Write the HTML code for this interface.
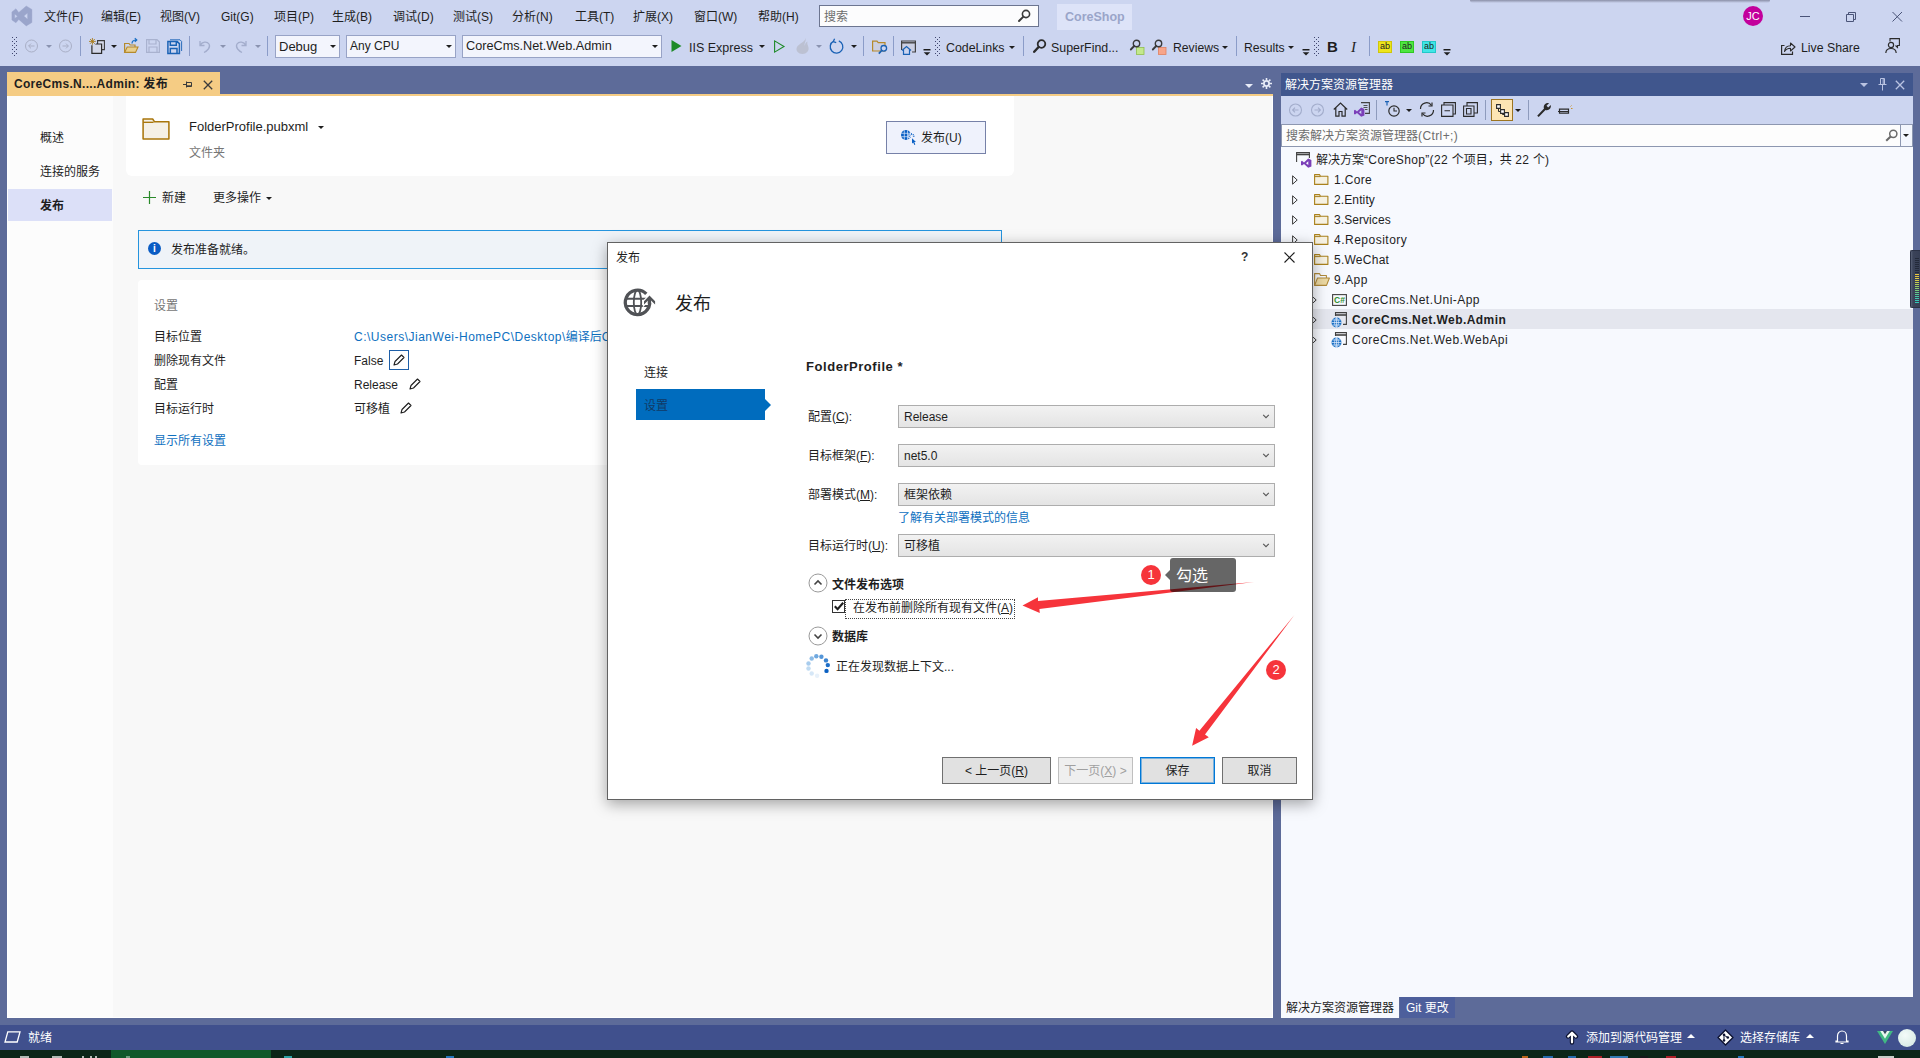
<!DOCTYPE html>
<html lang="zh-CN">
<head>
<meta charset="utf-8">
<title>CoreShop - Microsoft Visual Studio</title>
<style>
*{box-sizing:border-box;margin:0;padding:0}
html,body{width:1920px;height:1058px;overflow:hidden}
body{background:#5d6b99;font-family:"Liberation Sans","Noto Sans CJK SC",sans-serif;font-size:12px;color:#1e1e1e;position:relative;line-height:1}
.abs{position:absolute}
.t{position:absolute;white-space:nowrap;line-height:16px;height:16px}
#top{position:absolute;left:0;top:0;width:1920px;height:66px;background:#ccd5f0}
#status{position:absolute;left:0;top:1025px;width:1920px;height:25px;background:#40508d;color:#fff}
#taskbar{position:absolute;left:0;top:1050px;width:1920px;height:8px;background:#0b2618}
#doc{position:absolute;left:7px;top:96px;width:1266px;height:922px;background:#f8f8f8;overflow:hidden}
#doctab{position:absolute;left:7px;top:72px;width:213px;height:23px;background:#f5cc84}
#docline{position:absolute;left:7px;top:94px;width:1266px;height:2px;background:#f5cc84}
#se{position:absolute;left:1281px;top:73px;width:632px;height:945px}

.m{position:absolute;top:9px;line-height:16px;white-space:nowrap;color:#1e1e1e}
.tb{position:absolute;top:40px;line-height:16px;white-space:nowrap;color:#1e1e1e}
.sep{position:absolute;top:36px;width:1px;height:20px;background:#8b9cc8}
.dd{position:absolute;width:0;height:0;border-left:3px solid transparent;border-right:3px solid transparent;border-top:3px solid #1e1e1e}
.dd.g{border-top-color:#8a93b0}
.combo{position:absolute;top:35px;height:23px;background:#f3f5fd;border:1px solid #98a3c6;line-height:21px;padding-left:3px;white-space:nowrap;font-size:13px}
.grip{position:absolute;width:5px;height:19px;top:37px;background-image:radial-gradient(circle,#6d789c 0.6px,transparent 0.9px);background-size:2.5px 2.5px}
svg{position:absolute;overflow:visible}

#doc .nav{position:absolute;left:0;top:0;width:106px;height:922px;background:#fcfcfc}
#doc .card{position:absolute;background:#fff}
.lk{color:#0e70c0}

#se .title{position:absolute;left:0;top:0;width:632px;height:23px;background:#40568d;color:#fff}
#se .tbar{position:absolute;left:0;top:23px;width:632px;height:28px;background:#ccd5f0}
#se .search{position:absolute;left:0;top:51px;width:632px;height:23px;background:#fdfdfd;border:1px solid #8d97b0}
#se .tree{position:absolute;left:0;top:74px;width:632px;height:850px;background:#f7f9fe}
#se .row{position:absolute;left:0;width:632px;height:20px}
#se .row span{position:absolute;top:3px;line-height:16px;white-space:nowrap}
.exp{position:absolute;width:0;height:0}

#dlg{position:absolute;left:607px;top:242px;width:706px;height:558px;background:#fff;border:1px solid #626262;box-shadow:0 4px 14px rgba(0,0,0,.35)}
#dlg .cb{position:absolute;left:290px;width:377px;height:23px;border:1px solid #adadad;background:linear-gradient(#f2f2f2,#e4e4e4);line-height:23px;padding-left:5px;white-space:nowrap}
#dlg .btn{position:absolute;top:514px;height:27px;border:1px solid #707070;background:#e1e1e1;text-align:center;line-height:27px;white-space:nowrap}
#dlg u{text-decoration:underline}
.chev{position:absolute;left:363px}
#doc::after{content:"";position:absolute;left:0;top:0;right:0;bottom:0;border:1px solid #fff;border-top:none;pointer-events:none}
</style>
</head>
<body>
<div id="top">
<svg style="left:12px;top:6px" width="20" height="20" viewBox="0 0 20 20"><path d="M14.250 0 L19.900 3.400 V16.500 L14.250 19.900 L6.750 13.400 L3.900 16.800 L-0.1 14 V5.900 L3.900 2.750 L6.750 6.500 Z M2.700 8 L5.500 10.250 L2.700 12.500 Z M15.600 7 L11.800 10.100 L15.600 13.200 Z" fill="#9aa5cb" fill-rule="evenodd" stroke="#9aa5cb" stroke-width="0.4" stroke-linejoin="round"/></svg>
<span class="m" style="left:44px">文件(F)</span>
<span class="m" style="left:101px">编辑(E)</span>
<span class="m" style="left:160px">视图(V)</span>
<span class="m" style="left:221px">Git(G)</span>
<span class="m" style="left:274px">项目(P)</span>
<span class="m" style="left:332px">生成(B)</span>
<span class="m" style="left:393px">调试(D)</span>
<span class="m" style="left:453px">测试(S)</span>
<span class="m" style="left:512px">分析(N)</span>
<span class="m" style="left:575px">工具(T)</span>
<span class="m" style="left:633px">扩展(X)</span>
<span class="m" style="left:694px">窗口(W)</span>
<span class="m" style="left:758px">帮助(H)</span>
<div class="abs" style="left:819px;top:5px;width:220px;height:22px;background:#fcfcfd;border:1px solid #6c7590"></div>
<span class="m" style="left:824px;color:#6d6d6d">搜索</span>
<svg style="left:1018px;top:9px" width="13" height="13" viewBox="0 0 13 13"><circle cx="8" cy="5" r="3.6" fill="none" stroke="#3b3b3b" stroke-width="1.6"/><path d="M5.4 7.6 L1 12" stroke="#3b3b3b" stroke-width="2" stroke-linecap="round"/></svg>
<div class="abs" style="left:1057px;top:4px;width:75px;height:26px;background:#dde3f8"></div>
<span class="m" style="left:1065px;color:#9aa5c9;font-weight:bold;font-size:12.5px">CoreShop</span>
<div class="abs" style="left:1743px;top:6px;width:20px;height:20px;border-radius:10px;background:#c3009c;color:#fff;font-size:11px;line-height:20px;text-align:center">JC</div>
<svg style="left:1800px;top:11px" width="110" height="12" viewBox="0 0 110 12"><path d="M0 5.5 H10" stroke="#4a5478" stroke-width="1"/><path d="M46.5 3.5 H53.5 V10.5 H46.5 Z M48.5 3.5 V1.5 H55.5 V8.5 H53.5" fill="none" stroke="#4a5478" stroke-width="1"/><path d="M92.5 1 L102 10.5 M102 1 L92.5 10.5" stroke="#4a5478" stroke-width="1"/></svg>

<!-- toolbar -->
<svg style="left:12px;top:37px" width="5" height="19" viewBox="0 0 5 19" fill="#40466f" shape-rendering="crispEdges"><rect x="0" y="0" width="1" height="1"/><rect x="4" y="0" width="1" height="1"/><rect x="2" y="2" width="1" height="1"/><rect x="0" y="4" width="1" height="1"/><rect x="4" y="4" width="1" height="1"/><rect x="2" y="6" width="1" height="1"/><rect x="0" y="8" width="1" height="1"/><rect x="4" y="8" width="1" height="1"/><rect x="2" y="10" width="1" height="1"/><rect x="0" y="12" width="1" height="1"/><rect x="4" y="12" width="1" height="1"/><rect x="2" y="14" width="1" height="1"/><rect x="0" y="16" width="1" height="1"/><rect x="4" y="16" width="1" height="1"/><rect x="2" y="18" width="1" height="1"/></svg>
<svg style="left:25px;top:39px" width="50" height="14" viewBox="0 0 50 14"><g fill="none" stroke="#a9afc6" stroke-width="1"><circle cx="6.5" cy="7" r="6"/><path d="M9.5 7 H3.8 M6 4.6 L3.6 7 L6 9.4"/><circle cx="40.5" cy="7" r="6"/><path d="M37.5 7 H43.2 M41 4.6 L43.4 7 L41 9.4"/></g></svg>
<div class="dd g" style="left:46px;top:45px"></div>
<div class="sep" style="left:80px"></div>
<svg style="left:89px;top:38px" width="16" height="16" viewBox="0 0 16 16"><path d="M8.600 2.600 H15.400 V11.600 H8.600 Z" fill="#d9dcec" stroke="#3a3a3a" stroke-width="1.1"/><path d="M2.900 6 H12.600 V15.400 H2.900 Z" fill="#d3d7e8" stroke="#2b2b2b" stroke-width="1.2"/><circle cx="3.400" cy="3.400" r="3.900" fill="#ccd5f0"/><path d="M3.400 0 V6.800 M0 3.400 H6.800 M1 1 L5.800 5.800 M5.800 1 L1 5.800" stroke="#a87b1a" stroke-width="0.9"/></svg>
<div class="dd" style="left:111px;top:45px"></div>
<svg style="left:124px;top:38px" width="15" height="16" viewBox="0 0 15 16"><path d="M0.6 14.400 V5.5 H5 L6.2 7 H11 V9" fill="none" stroke="#b58a2c" stroke-width="1.2"/><path d="M0.6 14.400 L3.2 9 H14 L11.5 14.400 Z" fill="#e8cf8f" stroke="#b58a2c" stroke-width="1.1"/><path d="M8 5.5 C8 3 10 2 12.5 2 M10.8 0.3 L12.8 2 L10.8 3.900" fill="none" stroke="#1a6fc4" stroke-width="1.2"/></svg>
<svg style="left:146px;top:39px" width="14" height="14" viewBox="0 0 14 14"><path d="M0.6 0.6 H11 L13.4 3 V13.4 H0.6 Z M3 0.6 V5 H10 V0.6 M3 13.4 V8 H11 V13.4" fill="none" stroke="#a9b2cf" stroke-width="1.2"/></svg>
<svg style="left:167px;top:38px" width="16" height="16" viewBox="0 0 16 16"><path d="M0.900 3.600 H10.200 L12.400 5.600 V15.400 H0.900 Z M3.300 3.600 V7.200 H9.300 V3.600 M3.300 15.400 V10.600 H10 V15.400" fill="none" stroke="#1a62b5" stroke-width="1.5"/><path d="M3 1.800 H13 L14.600 3.400 V13" fill="none" stroke="#1a62b5" stroke-width="0.9"/></svg>
<div class="sep" style="left:189px"></div>
<svg style="left:199px;top:40px" width="50" height="13" viewBox="0 0 50 13"><g fill="none" stroke="#a3adcc" stroke-width="1.3"><path d="M1 1 V5.5 H5.5 M1.200 5.300 C3 1.500 8 1 10 4 C12 7.500 8 11 5 12.5"/><path d="M47 1 V5.5 H42.5 M46.800 5.300 C45 1.500 40 1 38 4 C36 7.500 40 11 43 12.5"/></g></svg>
<div class="dd g" style="left:220px;top:45px"></div>
<div class="dd g" style="left:255px;top:45px"></div>
<div class="sep" style="left:267px"></div>
<div class="combo" style="left:275px;width:65px">Debug</div><div class="dd" style="left:330px;top:45px"></div>
<div class="combo" style="left:346px;width:110px;font-size:12px">Any CPU</div><div class="dd" style="left:446px;top:45px"></div>
<div class="combo" style="left:462px;width:200px;font-size:12.700px">CoreCms.Net.Web.Admin</div><div class="dd" style="left:652px;top:45px"></div>
<svg style="left:671px;top:40px" width="11" height="12" viewBox="0 0 11 12"><path d="M0.5 0 L10.5 6 L0.5 12 Z" fill="#1d8a27"/></svg>
<span class="tb" style="left:689px;font-size:12.500px">IIS Express</span>
<div class="dd" style="left:759px;top:45px"></div>
<svg style="left:774px;top:40px" width="11" height="13" viewBox="0 0 11 13"><path d="M0.6 0.900 L10 6.500 L0.6 12.100 Z" fill="none" stroke="#1d8a27" stroke-width="1.1"/></svg>
<svg style="left:795px;top:38px" width="15" height="16" viewBox="0 0 15 16"><path d="M10.500 0 C10.500 4 3.500 5.500 1.800 9.500 C0.5 13 3.500 16 7.500 16 C11.500 16 14.200 13 13.500 9.500 C13 7 11.800 6 12.400 3.500 C10.200 4.500 10 6.500 10 7.800 C8.500 6 11.500 3 10.500 0 Z" fill="#bcc1d2"/></svg>
<div class="dd g" style="left:816px;top:45px"></div>
<svg style="left:829px;top:39px" width="15" height="15" viewBox="0 0 15 15"><path d="M4.600 2.200 A6.300 6.300 0 1 0 9.800 1.900 M5.600 -0.300 L4.200 2.600 L7.200 3.600" fill="none" stroke="#1a62b5" stroke-width="1.3"/></svg>
<div class="dd" style="left:851px;top:45px"></div>
<div class="sep" style="left:863px"></div>
<svg style="left:872px;top:40px" width="16" height="15" viewBox="0 0 16 15"><path d="M0.6 11 V1.200 H5 L6.200 2.700 H13 V11 Z" fill="#cbcfe2" stroke="#b58a2c" stroke-width="1.2"/><circle cx="11.800" cy="8.300" r="2.800" fill="#ccd5f0" stroke="#1a62b5" stroke-width="1.3"/><path d="M9.800 10.400 L6.800 13.600" stroke="#1a62b5" stroke-width="1.600"/></svg>
<div class="sep" style="left:893px"></div>
<svg style="left:901px;top:40px" width="16" height="15" viewBox="0 0 16 15"><path d="M0.6 10 V1 H14.400 V12 H11" fill="#cbcfe2" stroke="#424242" stroke-width="1.2"/><path d="M0.6 2.800 H14.400" stroke="#424242" stroke-width="1.4"/><path d="M2.500 9.500 V14.400 H8.500 V9.500" fill="#ccd5f0" stroke="#1a62b5" stroke-width="1.2"/><path d="M1 10.500 L5.500 6.500 L10 10.500" fill="none" stroke="#1a62b5" stroke-width="1.2"/></svg>
<svg style="left:923px;top:49px" width="8" height="7" viewBox="0 0 8 7"><path d="M0.5 0.75 H7.500" stroke="#1e1e1e" stroke-width="1.5"/><path d="M0.7 3.200 H7.300 L4 6.500 Z" fill="#1e1e1e"/></svg>
<svg style="left:935px;top:37px" width="5" height="19" viewBox="0 0 5 19" fill="#40466f" shape-rendering="crispEdges"><rect x="0" y="0" width="1" height="1"/><rect x="4" y="0" width="1" height="1"/><rect x="2" y="2" width="1" height="1"/><rect x="0" y="4" width="1" height="1"/><rect x="4" y="4" width="1" height="1"/><rect x="2" y="6" width="1" height="1"/><rect x="0" y="8" width="1" height="1"/><rect x="4" y="8" width="1" height="1"/><rect x="2" y="10" width="1" height="1"/><rect x="0" y="12" width="1" height="1"/><rect x="4" y="12" width="1" height="1"/><rect x="2" y="14" width="1" height="1"/><rect x="0" y="16" width="1" height="1"/><rect x="4" y="16" width="1" height="1"/><rect x="2" y="18" width="1" height="1"/></svg>
<span class="tb" style="left:946px;font-size:12.400px">CodeLinks</span><div class="dd" style="left:1009px;top:46px"></div>
<div class="sep" style="left:1023px"></div>
<svg style="left:1033px;top:39px" width="14" height="14" viewBox="0 0 14 14"><circle cx="8.500" cy="5" r="3.800" fill="none" stroke="#2b2b2b" stroke-width="1.8"/><path d="M5.600 8 L1.200 12.800" stroke="#2b2b2b" stroke-width="2.400" stroke-linecap="round"/></svg>
<span class="tb" style="left:1051px;font-size:12.400px">SuperFind...</span>
<svg style="left:1130px;top:39px" width="15" height="16" viewBox="0 0 15 16"><rect x="6.500" y="8.500" width="7.500" height="7" fill="#c3e88d" stroke="#8fbf4d" stroke-width="0.8"/><circle cx="6.500" cy="4.500" r="3.200" fill="none" stroke="#3a3a3a" stroke-width="1.4"/><path d="M4.200 7 L0.8 10.500" stroke="#3a3a3a" stroke-width="1.800" stroke-linecap="round"/></svg>
<svg style="left:1152px;top:39px" width="15" height="16" viewBox="0 0 15 16"><rect x="6.500" y="8.500" width="7.500" height="7" fill="#f7a58a" stroke="#e0805f" stroke-width="0.8"/><circle cx="6.500" cy="4.500" r="3.200" fill="none" stroke="#3a3a3a" stroke-width="1.4"/><path d="M4.200 7 L0.8 10.500" stroke="#3a3a3a" stroke-width="1.800" stroke-linecap="round"/></svg>
<span class="tb" style="left:1173px;font-size:12.200px">Reviews</span><div class="dd" style="left:1222px;top:46px"></div>
<div class="sep" style="left:1236px"></div>
<span class="tb" style="left:1244px;font-size:12.200px">Results</span><div class="dd" style="left:1288px;top:46px"></div>
<svg style="left:1302px;top:49px" width="8" height="7" viewBox="0 0 8 7"><path d="M0.5 0.75 H7.500" stroke="#1e1e1e" stroke-width="1.5"/><path d="M0.7 3.200 H7.300 L4 6.500 Z" fill="#1e1e1e"/></svg>
<svg style="left:1314px;top:37px" width="5" height="19" viewBox="0 0 5 19" fill="#40466f" shape-rendering="crispEdges"><rect x="0" y="0" width="1" height="1"/><rect x="4" y="0" width="1" height="1"/><rect x="2" y="2" width="1" height="1"/><rect x="0" y="4" width="1" height="1"/><rect x="4" y="4" width="1" height="1"/><rect x="2" y="6" width="1" height="1"/><rect x="0" y="8" width="1" height="1"/><rect x="4" y="8" width="1" height="1"/><rect x="2" y="10" width="1" height="1"/><rect x="0" y="12" width="1" height="1"/><rect x="4" y="12" width="1" height="1"/><rect x="2" y="14" width="1" height="1"/><rect x="0" y="16" width="1" height="1"/><rect x="4" y="16" width="1" height="1"/><rect x="2" y="18" width="1" height="1"/></svg>
<span class="tb" style="left:1327px;font-size:15px;font-weight:bold;top:39px">B</span>
<span class="tb" style="left:1351px;font-size:15px;font-style:italic;font-family:'Liberation Serif',serif;top:39px">I</span>
<div class="sep" style="left:1369px"></div>
<div class="abs" style="left:1378px;top:41px;width:14px;height:12px;background:#eee51a;border:1px solid #cfc60a;font-size:9px;line-height:9px;text-align:center;color:#222">ab</div>
<div class="abs" style="left:1400px;top:41px;width:14px;height:12px;background:#4de640;border:1px solid #2fc822;font-size:9px;line-height:9px;text-align:center;color:#222">ab</div>
<div class="abs" style="left:1422px;top:41px;width:14px;height:12px;background:#40e6e6;border:1px solid #22c8c8;font-size:9px;line-height:9px;text-align:center;color:#222">ab</div>
<svg style="left:1443px;top:49px" width="8" height="7" viewBox="0 0 8 7"><path d="M0.5 0.75 H7.500" stroke="#1e1e1e" stroke-width="1.5"/><path d="M0.7 3.200 H7.300 L4 6.500 Z" fill="#1e1e1e"/></svg>
<svg style="left:1781px;top:41px" width="15" height="14" viewBox="0 0 15 14"><path d="M3.500 4.500 H0.6 V13.400 H11.500 V10.500" fill="none" stroke="#2b2b2b" stroke-width="1.2"/><path d="M3.500 10.500 C4 6.500 6.500 4.800 9.500 4.800 V2 L14 6 L9.500 10 V7.200 C7 7.200 5 8 3.500 10.500 Z" fill="none" stroke="#2b2b2b" stroke-width="1.1" stroke-linejoin="round"/></svg>
<span class="tb" style="left:1801px;font-size:12.300px;top:40px">Live Share</span>
<svg style="left:1885px;top:38px" width="15" height="16" viewBox="0 0 15 16"><path d="M5 3.500 V0.6 H14.400 V7.500 H12.5 V9.500 L10.500 7.500" fill="none" stroke="#2b2b2b" stroke-width="1.1"/><circle cx="6" cy="7" r="2.600" fill="none" stroke="#2b2b2b" stroke-width="1.2"/><path d="M0.8 15 C1 11.500 3 10.500 6 10.500 C9 10.500 11 11.500 11.200 15" fill="none" stroke="#2b2b2b" stroke-width="1.2"/></svg>
</div>
<div class="abs" style="left:1470px;top:0;width:300px;height:3px;background:linear-gradient(rgba(60,60,80,.45),rgba(60,60,80,0));border-radius:0 0 3px 3px"></div>
<div id="doctab"><span class="t" style="left:7px;top:4px;font-weight:bold;color:#1e1e1e;letter-spacing:0.3px">CoreCms.N....Admin: 发布</span>
<svg style="left:176px;top:8px" width="10" height="9" viewBox="0 0 10 9"><path d="M0 4.500 H3.500 M3.500 1.500 V7.500 M3.500 2.500 H8.500 V6.500 H3.500 M3.500 5.800 H8.500" fill="none" stroke="#3b3b3b" stroke-width="1"/></svg>
<svg style="left:196px;top:8px" width="10" height="10" viewBox="0 0 10 10"><path d="M0.8 0.8 L9.200 9.200 M9.200 0.8 L0.8 9.200" stroke="#3b3b3b" stroke-width="1.3"/></svg>
</div>
<div class="dd" style="left:1245px;top:84px;border-top-color:#e8ecf8;border-left-width:4px;border-right-width:4px;border-top-width:4px"></div>
<svg style="left:1261px;top:78px" width="11" height="11" viewBox="0 0 11 11"><circle cx="5.500" cy="5.500" r="2.600" fill="none" stroke="#e8ecf8" stroke-width="1.8"/><g stroke="#e8ecf8" stroke-width="1.6"><path d="M5.500 0 V2 M5.500 9 V11 M0 5.500 H2 M9 5.500 H11 M1.600 1.600 L3 3 M8 8 L9.400 9.400 M1.600 9.400 L3 8 M8 3 L9.400 1.600"/></g></svg>
<div id="docline"></div>
<div id="doc">
<div class="nav"></div>
<div class="abs" style="left:1px;top:93px;width:104px;height:32px;background:#dce0f8"></div>
<span class="t" style="left:33px;top:34px">概述</span>
<span class="t" style="left:33px;top:68px">连接的服务</span>
<span class="t" style="left:33px;top:102px;font-weight:bold">发布</span>
<div class="card" style="left:119px;top:0px;width:888px;height:80px;border-radius:0 0 6px 6px"></div>
<svg style="left:135px;top:22px" width="28" height="22" viewBox="0 0 29 23"><path d="M1 22 V1 H11 L13 4 H28 V22 Z" fill="#f5f0e6" stroke="#a9760b" stroke-width="1.6" stroke-linejoin="round"/><path d="M1 4.500 H12" stroke="#a9760b" stroke-width="1.4"/></svg>
<span class="t" style="left:182px;top:23px;font-size:13px">FolderProfile.pubxml</span>
<div class="dd" style="left:311px;top:30px;border-left-width:3.500px;border-right-width:3.500px;border-top-width:3.500px"></div>
<span class="t" style="left:182px;top:49px;color:#767676">文件夹</span>
<svg style="left:136px;top:95px" width="13" height="13" viewBox="0 0 13 13"><path d="M6.500 0 V13 M0 6.500 H13" stroke="#2a8a2a" stroke-width="1.2"/></svg>
<span class="t" style="left:155px;top:94px">新建</span>
<span class="t" style="left:206px;top:94px">更多操作</span>
<div class="dd" style="left:259px;top:101px"></div>
<div class="abs" style="left:131px;top:134px;width:864px;height:39px;background:#eff3f8;border:1px solid #2594de"></div>
<div class="abs" style="left:141px;top:146px;width:13px;height:13px;border-radius:7px;background:#0a5cc4;color:#fff;font-size:10px;line-height:13px;text-align:center;font-weight:bold">i</div>
<span class="t" style="left:164px;top:146px">发布准备就绪。</span>
<div class="card" style="left:131px;top:184px;width:864px;height:185px;border-radius:4px"></div>
<span class="t" style="left:147px;top:202px;color:#767676">设置</span>
<span class="t" style="left:147px;top:233px">目标位置</span>
<span class="t" style="left:147px;top:257px">删除现有文件</span>
<span class="t" style="left:147px;top:281px">配置</span>
<span class="t" style="left:147px;top:305px">目标运行时</span>
<span class="t lk" style="left:347px;top:233px"><span style="letter-spacing:0.5px">C:\Users\JianWei-HomePC\Desktop\</span>编译后CoreShop</span>
<span class="t" style="left:347px;top:257px">False</span>
<div class="abs" style="left:382px;top:254px;width:20px;height:20px;border:1px solid #1e5fa8;background:#fff"></div>
<svg style="left:386px;top:258px" width="12" height="12" viewBox="0 0 12 12"><path d="M1 11 L2 7.500 L8.500 1 L11 3.500 L4.500 10 Z" fill="none" stroke="#1e1e1e" stroke-width="1.1" stroke-linejoin="round"/></svg>
<span class="t" style="left:347px;top:281px">Release</span>
<svg style="left:402px;top:282px" width="12" height="12" viewBox="0 0 12 12"><path d="M1 11 L2 7.500 L8.500 1 L11 3.500 L4.500 10 Z" fill="none" stroke="#1e1e1e" stroke-width="1.1" stroke-linejoin="round"/></svg>
<span class="t" style="left:347px;top:305px">可移植</span>
<svg style="left:393px;top:306px" width="12" height="12" viewBox="0 0 12 12"><path d="M1 11 L2 7.500 L8.500 1 L11 3.500 L4.500 10 Z" fill="none" stroke="#1e1e1e" stroke-width="1.1" stroke-linejoin="round"/></svg>
<span class="t lk" style="left:147px;top:337px">显示所有设置</span>
<div class="abs" style="left:879px;top:25px;width:100px;height:33px;background:#eff2fc;border:1px solid #7681a8"></div>
<svg style="left:893px;top:33px" width="18" height="18" viewBox="0 0 18 18"><circle cx="5.900" cy="6" r="4.900" fill="#0a60c4"/><path d="M1.200 4.300 H10.700 M1.200 7.700 H10.700 M4.300 1.200 V10.800 M7.500 1.200 V10.800" stroke="#dfe9fb" stroke-width="0.7" fill="none"/><circle cx="11.400" cy="7.300" r="3.300" fill="#eef1fc"/><path d="M11.500 4.200 V5.800 M8.600 7.200 H10.200 M12.900 7.200 H14.500 M9.400 5 L10.500 6.100 M13.700 5 L12.600 6.100 M9.400 9.400 L10.400 8.400" stroke="#0a60c4" stroke-width="1" fill="none"/><path d="M12 9.250 V14.600 L13.300 13.400 L14.300 15.900 L15.300 15.500 L14.300 13 L16 12.900 Z" fill="#0a60c4"/></svg>
<span class="t" style="left:914px;top:34px">发布(U)</span>
</div>
<div id="se">
<div class="title"><span class="t" style="left:4px;top:4px">解决方案资源管理器</span>
<div class="dd" style="left:579px;top:10px;border-top-color:#b9c3e2;border-left-width:4px;border-right-width:4px;border-top-width:4px"></div>
<svg style="left:597px;top:5px" width="9" height="13" viewBox="0 0 9 13"><path d="M2.500 0.5 H6.500 V6.500 H2.500 Z M5.200 0.5 V6.500 M0.5 6.500 H8.500 M4.500 6.500 V12.500" fill="none" stroke="#b9c3e2" stroke-width="1"/></svg>
<svg style="left:614px;top:7px" width="10" height="10" viewBox="0 0 10 10"><path d="M0.8 0.8 L9.200 9.200 M9.200 0.8 L0.8 9.200" stroke="#b9c3e2" stroke-width="1.3"/></svg>
</div>
<div class="tbar">
<svg style="left:8px;top:7px" width="40" height="14" viewBox="0 0 40 14"><g fill="none" stroke="#a3adcc" stroke-width="1.1"><circle cx="6.500" cy="7" r="6"/><path d="M9.500 7 H3.800 M6 4.600 L3.600 7 L6 9.400"/><circle cx="28.500" cy="7" r="6"/><path d="M25.500 7 H31.200 M29 4.600 L31.400 7 L29 9.400"/></g></svg>
<svg style="left:52px;top:6px" width="15" height="15" viewBox="0 0 15 15"><path d="M0.8 7.500 L7.500 1 L14.200 7.500 M2.800 6 V14.200 H6 V9.500 H9 V14.200 H12.200 V6" fill="none" stroke="#2b2b2b" stroke-width="1.2"/></svg>
<svg style="left:73px;top:6px" width="16" height="16" viewBox="0 0 16 16"><path d="M7 0.6 H15.400 V11.400 H11" fill="none" stroke="#424242" stroke-width="1.1"/><path d="M9.500 3.500 H13.500 M9.500 5.500 H13.500 M11 7.500 H13.500" stroke="#424242" stroke-width="0.9"/><path d="M7.200 5.500 L10.400 7 V13.500 L7.200 14.800 L3 11 L1 12.600 L0 12 V8.400 L1 7.800 L3 9.400 Z M7.300 8.300 L5 10.200 L7.300 12.100 Z" fill="#7b3fb8" fill-rule="evenodd"/></svg>
<div class="abs" style="left:95px;top:4px;width:1px;height:20px;background:#8e9bbc"></div>
<svg style="left:104px;top:5px" width="16" height="17" viewBox="0 0 16 17"><circle cx="9" cy="10" r="5.200" fill="none" stroke="#2b2b2b" stroke-width="1.2"/><path d="M9 6.800 V10 H12" fill="none" stroke="#2b2b2b" stroke-width="1.1"/><path d="M0 0.6 H4 M2 0.6 V4.500" stroke="#1a62b5" stroke-width="1.2"/></svg>
<div class="dd" style="left:125px;top:13px"></div>
<svg style="left:138px;top:6px" width="16" height="15" viewBox="0 0 16 15"><path d="M1.500 7 A6 6 0 0 1 12.500 3.500 M14.500 8 A6 6 0 0 1 3.500 11.500" fill="none" stroke="#2b2b2b" stroke-width="1.2"/><path d="M13 0.5 V4 H9.500 M3 14.500 V11 H6.500" fill="none" stroke="#2b2b2b" stroke-width="1.2"/></svg>
<svg style="left:160px;top:6px" width="15" height="15" viewBox="0 0 15 15"><path d="M3 3 V0.6 H14.400 V12 H12 M0.6 3 H12 V14.400 H0.6 Z M3.500 8.700 H9" fill="none" stroke="#2b2b2b" stroke-width="1.1"/></svg>
<svg style="left:182px;top:6px" width="15" height="15" viewBox="0 0 15 15"><path d="M4 4 V0.6 H14.400 V11 H11 M0.6 4 H11 V14.400 H0.6 Z M3.500 6.500 H8 V12 H3.500 Z" fill="none" stroke="#2b2b2b" stroke-width="1.1"/></svg>
<div class="abs" style="left:204px;top:4px;width:1px;height:20px;background:#8e9bbc"></div>
<div class="abs" style="left:210px;top:3px;width:22px;height:22px;background:#fde5b4;border:1px solid #9c7420"></div>
<svg style="left:215px;top:8px" width="13" height="13" viewBox="0 0 13 13"><path d="M0.6 0.6 H4.400 V4.400 H0.6 Z M4.600 5.600 H8.400 V9.400 H4.600 Z M8.600 8.600 H12.400 V12.400 H8.600 Z" fill="#fff" stroke="#2b2b2b" stroke-width="1.1"/><path d="M2.500 4.400 V7.500 H4.600 M6.500 9.400 V10.500 H8.600" fill="none" stroke="#2b2b2b" stroke-width="1"/></svg>
<div class="dd" style="left:234px;top:13px"></div>
<div class="abs" style="left:247px;top:4px;width:1px;height:20px;background:#8e9bbc"></div>
<svg style="left:255px;top:6px" width="16" height="15" viewBox="0 0 16 15"><path d="M1.200 13.800 L8 6.500 C7 3.500 9.500 0.5 13 1.200 L10.500 3.800 L12.200 5.500 L14.800 3 C15.500 6.500 12.500 9 9.500 8 L2.700 15 Z" fill="#2b2b2b"/></svg>
<svg style="left:277px;top:9px" width="16" height="9" viewBox="0 0 16 9"><path d="M0 6.500 H10.500 M1.500 4.200 H10.500 V8.200 H1.500 Z" fill="none" stroke="#2b2b2b" stroke-width="1.2"/><path d="M12.500 1.500 L13.500 0.5 M13 3.500 H14.500" stroke="#c98a10" stroke-width="0.9"/></svg>
</div>
<div class="search"><span class="t" style="left:4px;top:3px;color:#6d6d6d">搜索解决方案资源管理器<span style="letter-spacing:0.4px">(Ctrl+;)</span></span>
<svg style="left:603px;top:4px" width="13" height="13" viewBox="0 0 13 13"><circle cx="8.300" cy="4.800" r="3.600" fill="none" stroke="#6a6a6a" stroke-width="1.5"/><path d="M5.700 7.500 L1.200 11.800" stroke="#6a6a6a" stroke-width="2.100"/></svg>
<div class="abs" style="left:618px;top:0;width:12px;height:21px;background:#f3f6fd;border-left:1px solid #8d97b0"></div>
<div class="dd" style="left:621px;top:9px"></div>
</div>
<div class="tree"><div class="row" style="top:2px;"><svg style="left:15px;top:3px" width="16" height="16" viewBox="0 0 16 16"><path d="M0.6 10 V0.6 H13.400 V6" fill="none" stroke="#424242" stroke-width="1.1"/><path d="M0.6 2.500 H13.400" stroke="#424242" stroke-width="1.6"/><path d="M12.200 6.500 L15.400 8 V14.500 L12.200 15.800 L8 12 L6 13.600 L5 13 V9.400 L6 8.800 L8 10.400 Z M12.300 9.300 L10 11.200 L12.300 13.100 Z" fill="#7b3fb8" fill-rule="evenodd"/></svg><span style="left:35px;">解决方案<span style="position:static;letter-spacing:0.35px">“CoreShop”(22 </span>个项目，共<span style="position:static;letter-spacing:0.35px"> 22 </span>个)</span></div><div class="row" style="top:22px;"><svg style="left:11px;top:6px" width="6" height="10" viewBox="0 0 6 10"><path d="M0.6 0.8 L5.200 5 L0.6 9.200 Z" fill="none" stroke="#3b3b3b" stroke-width="1"/></svg><svg style="left:33px;top:4px" width="15" height="13" viewBox="0 0 15 13"><path d="M0.6 11.400 V1.600 H5.500 L6.500 3.300 H13.900 V11.400 Z" fill="#f6f1e2" stroke="#a9811d" stroke-width="1.1" stroke-linejoin="round"/><path d="M0.6 3.600 H6.500" stroke="#a9811d" stroke-width="1"/></svg><span style="left:53px;letter-spacing:0.33px">1.Core</span></div><div class="row" style="top:42px;"><svg style="left:11px;top:6px" width="6" height="10" viewBox="0 0 6 10"><path d="M0.6 0.8 L5.200 5 L0.6 9.200 Z" fill="none" stroke="#3b3b3b" stroke-width="1"/></svg><svg style="left:33px;top:4px" width="15" height="13" viewBox="0 0 15 13"><path d="M0.6 11.400 V1.600 H5.500 L6.500 3.300 H13.900 V11.400 Z" fill="#f6f1e2" stroke="#a9811d" stroke-width="1.1" stroke-linejoin="round"/><path d="M0.6 3.600 H6.500" stroke="#a9811d" stroke-width="1"/></svg><span style="left:53px;letter-spacing:0.12px">2.Entity</span></div><div class="row" style="top:62px;"><svg style="left:11px;top:6px" width="6" height="10" viewBox="0 0 6 10"><path d="M0.6 0.8 L5.200 5 L0.6 9.200 Z" fill="none" stroke="#3b3b3b" stroke-width="1"/></svg><svg style="left:33px;top:4px" width="15" height="13" viewBox="0 0 15 13"><path d="M0.6 11.400 V1.600 H5.500 L6.500 3.300 H13.900 V11.400 Z" fill="#f6f1e2" stroke="#a9811d" stroke-width="1.1" stroke-linejoin="round"/><path d="M0.6 3.600 H6.500" stroke="#a9811d" stroke-width="1"/></svg><span style="left:53px;letter-spacing:0.07px">3.Services</span></div><div class="row" style="top:82px;"><svg style="left:11px;top:6px" width="6" height="10" viewBox="0 0 6 10"><path d="M0.6 0.8 L5.200 5 L0.6 9.200 Z" fill="none" stroke="#3b3b3b" stroke-width="1"/></svg><svg style="left:33px;top:4px" width="15" height="13" viewBox="0 0 15 13"><path d="M0.6 11.400 V1.600 H5.500 L6.500 3.300 H13.900 V11.400 Z" fill="#f6f1e2" stroke="#a9811d" stroke-width="1.1" stroke-linejoin="round"/><path d="M0.6 3.600 H6.500" stroke="#a9811d" stroke-width="1"/></svg><span style="left:53px;letter-spacing:0.5px">4.Repository</span></div><div class="row" style="top:102px;"><svg style="left:11px;top:6px" width="6" height="10" viewBox="0 0 6 10"><path d="M0.6 0.8 L5.200 5 L0.6 9.200 Z" fill="none" stroke="#3b3b3b" stroke-width="1"/></svg><svg style="left:33px;top:4px" width="15" height="13" viewBox="0 0 15 13"><path d="M0.6 11.400 V1.600 H5.500 L6.500 3.300 H13.900 V11.400 Z" fill="#f6f1e2" stroke="#a9811d" stroke-width="1.1" stroke-linejoin="round"/><path d="M0.6 3.600 H6.500" stroke="#a9811d" stroke-width="1"/></svg><span style="left:53px;letter-spacing:0.25px">5.WeChat</span></div><div class="row" style="top:122px;"><svg style="left:11px;top:6px" width="6" height="10" viewBox="0 0 6 10"><path d="M0.6 0.8 L5.200 5 L0.6 9.200 Z" fill="none" stroke="#3b3b3b" stroke-width="1"/></svg><svg style="left:33px;top:4px" width="16" height="13" viewBox="0 0 16 13"><path d="M0.6 12.400 V0.6 H5.500 L6.500 2.500 H12.400 V5" fill="none" stroke="#b08a3a" stroke-width="1.1" stroke-linejoin="round"/><path d="M0.6 12.400 L3.500 5 H15.400 L12.500 12.400 Z" fill="#ecd9a3" stroke="#b08a3a" stroke-width="1.1" stroke-linejoin="round"/></svg><span style="left:53px;letter-spacing:0.5px">9.App</span></div><div class="row" style="top:142px;"><svg style="left:30px;top:6px" width="6" height="10" viewBox="0 0 6 10"><path d="M0.6 0.8 L5.200 5 L0.6 9.200 Z" fill="none" stroke="#3b3b3b" stroke-width="1"/></svg><svg style="left:51px;top:5px" width="15" height="12" viewBox="0 0 15 12"><rect x="0.6" y="0.6" width="13.800" height="10.800" fill="#f7f9fe" stroke="#424242" stroke-width="1.1"/><text x="2" y="9" font-size="8.500" font-weight="bold" fill="#2f8f2f" font-family="Liberation Sans, sans-serif">C#</text></svg><span style="left:71px;letter-spacing:0.45px">CoreCms.Net.Uni-App</span></div><div class="row" style="top:162px;background:#e4e6ee;"><svg style="left:30px;top:6px" width="6" height="10" viewBox="0 0 6 10"><path d="M0.6 0.8 L5.200 5 L0.6 9.200 Z" fill="none" stroke="#3b3b3b" stroke-width="1"/></svg><svg style="left:50px;top:3px" width="16" height="16" viewBox="0 0 16 16"><path d="M4.500 4 V0.6 H15.400 V12.400 H12" fill="none" stroke="#424242" stroke-width="1.1"/><path d="M4.500 3 H15.400" stroke="#424242" stroke-width="1.6"/><circle cx="5.500" cy="10.500" r="5" fill="#1a6fc4"/><path d="M0.5 10.500 H10.500 M5.500 5.500 V15.500 M1.500 8 H9.500 M1.500 13 H9.500 M5.500 5.500 C3 7.500 3 13.500 5.500 15.500 M5.500 5.500 C8 7.500 8 13.500 5.500 15.500" fill="none" stroke="#e8f0ff" stroke-width="0.7"/></svg><span style="left:71px;font-weight:bold;letter-spacing:0.43px">CoreCms.Net.Web.Admin</span></div><div class="row" style="top:182px;"><svg style="left:30px;top:6px" width="6" height="10" viewBox="0 0 6 10"><path d="M0.6 0.8 L5.200 5 L0.6 9.200 Z" fill="none" stroke="#3b3b3b" stroke-width="1"/></svg><svg style="left:50px;top:3px" width="16" height="16" viewBox="0 0 16 16"><path d="M4.500 4 V0.6 H15.400 V12.400 H12" fill="none" stroke="#424242" stroke-width="1.1"/><path d="M4.500 3 H15.400" stroke="#424242" stroke-width="1.6"/><circle cx="5.500" cy="10.500" r="5" fill="#1a6fc4"/><path d="M0.5 10.500 H10.500 M5.500 5.500 V15.500 M1.500 8 H9.500 M1.500 13 H9.500 M5.500 5.500 C3 7.500 3 13.500 5.500 15.500 M5.500 5.500 C8 7.500 8 13.500 5.500 15.500" fill="none" stroke="#e8f0ff" stroke-width="0.7"/></svg><span style="left:71px;letter-spacing:0.48px">CoreCms.Net.Web.WebApi</span></div></div>
<div class="abs" style="left:0;top:924px;width:118px;height:21px;background:#f7f9fe"></div>
<span class="t" style="left:5px;top:927px">解决方案资源管理器</span>
<div class="abs" style="left:119px;top:924px;width:55px;height:21px;background:#4d5f9c"></div>
<span class="t" style="left:125px;top:927px;color:#fff">Git 更改</span>
</div>
<div id="dlg">
<span class="t" style="left:8px;top:7px">发布</span>
<span class="t" style="left:633px;top:6px;font-size:12px;font-weight:bold;color:#333">?</span>
<svg style="left:676px;top:9px" width="11" height="11" viewBox="0 0 11 11"><path d="M0.5 0.5 L10.500 10.500 M10.500 0.5 L0.5 10.500" stroke="#1e1e1e" stroke-width="1.1"/></svg>
<svg style="left:15px;top:45px" width="34" height="30" viewBox="0 0 34 30"><g fill="none" stroke="#505256"><path d="M23.280 5.930 A12.200 12.200 0 1 0 25.960 10.200" stroke-width="3.300"/><ellipse cx="14.500" cy="14.400" rx="3.700" ry="12.200" stroke-width="1.800"/><path d="M3 10.700 H25 M3 17.900 H26" stroke-width="2"/></g><path d="M26.500 7.600 L32.100 13.300 V16.600 L26.500 10.900 L21 16.600 V13.300 Z" fill="#fff" stroke="#fff" stroke-width="2.400"/><path d="M26.500 7.600 L32.100 13.300 V16.600 L26.500 10.900 L21 16.600 V13.300 Z" fill="#505256"/><path d="M26.300 16 C26.600 14 26.500 12 26 10.500" fill="none" stroke="#505256" stroke-width="3.300"/></svg>
<span class="t" style="left:67px;top:49px;font-size:18px;line-height:24px;height:24px">发布</span>
<span class="t" style="left:36px;top:122px">连接</span>
<div class="abs" style="left:28px;top:146px;width:129px;height:31px;background:#006cbe"></div>
<div class="abs" style="left:157px;top:156px;width:0;height:0;border-top:6px solid transparent;border-bottom:6px solid transparent;border-left:6px solid #006cbe"></div>
<span class="t" style="left:36px;top:155px;color:#113a66">设置</span>
<span class="t" style="left:198px;top:116px;font-size:13px;font-weight:bold;letter-spacing:0.55px">FolderProfile *</span>
<span class="t" style="left:200px;top:166px">配置(<u>C</u>):</span>
<span class="t" style="left:200px;top:205px">目标框架(<u>F</u>):</span>
<span class="t" style="left:200px;top:244px">部署模式(<u>M</u>):</span>
<span class="t" style="left:200px;top:295px">目标运行时(<u>U</u>):</span>
<div class="cb" style="top:162px">Release<svg class="chev" style="top:8px" width="8" height="5" viewBox="0 0 8 5"><path d="M1.200 0.8 L4 3.600 L6.800 0.8" fill="none" stroke="#555" stroke-width="1.1"/></svg></div>
<div class="cb" style="top:201px">net5.0<svg class="chev" style="top:8px" width="8" height="5" viewBox="0 0 8 5"><path d="M1.200 0.8 L4 3.600 L6.800 0.8" fill="none" stroke="#555" stroke-width="1.1"/></svg></div>
<div class="cb" style="top:240px">框架依赖<svg class="chev" style="top:8px" width="8" height="5" viewBox="0 0 8 5"><path d="M1.200 0.8 L4 3.600 L6.800 0.8" fill="none" stroke="#555" stroke-width="1.1"/></svg></div>
<span class="t lk" style="left:290px;top:267px">了解有关部署模式的信息</span>
<div class="cb" style="top:291px">可移植<svg class="chev" style="top:8px" width="8" height="5" viewBox="0 0 8 5"><path d="M1.200 0.8 L4 3.600 L6.800 0.8" fill="none" stroke="#555" stroke-width="1.1"/></svg></div>
<svg style="left:199.500px;top:330.300px" width="20" height="20" viewBox="0 0 20 20"><circle cx="10" cy="10" r="9" fill="#fff" stroke="#9a9a9a" stroke-width="1"/><path d="M6.500 11.500 L10 8 L13.500 11.500" fill="none" stroke="#444" stroke-width="1.600"/></svg>
<span class="t" style="left:224px;top:334px;font-weight:bold">文件发布选项</span>
<div class="abs" style="left:224px;top:357px;width:13px;height:13px;border:1px solid #333;background:#fff"></div>
<svg style="left:226px;top:359px" width="10" height="9" viewBox="0 0 10 9"><path d="M0.8 4.300 L3.600 7.300 L9.200 0.8" fill="none" stroke="#1e1e1e" stroke-width="2.100"/></svg>
<div class="abs" style="left:237px;top:356px;width:170px;height:20px;border:1px dotted #444"></div>
<span class="t" style="left:245px;top:357px">在发布前删除所有现有文件(<u>A</u>)</span>
<svg style="left:199.500px;top:383.300px" width="20" height="20" viewBox="0 0 20 20"><circle cx="10" cy="10" r="9" fill="#fff" stroke="#9a9a9a" stroke-width="1"/><path d="M6.500 8.500 L10 12 L13.500 8.500" fill="none" stroke="#444" stroke-width="1.600"/></svg>
<span class="t" style="left:224px;top:386px;font-weight:bold">数据库</span>
<svg style="left:198px;top:411px" width="24" height="24" viewBox="0 0 24 24"><circle cx="20.5" cy="16.9" r="2.200" fill="#0a60c2"/><circle cx="21.8" cy="11.1" r="2.200" fill="#1c6ec8"/><circle cx="20.0" cy="6.4" r="2.200" fill="#3a83d0"/><circle cx="15.4" cy="2.8" r="2.200" fill="#5596d8"/><circle cx="10.3" cy="2.3" r="2.200" fill="#6fa8df"/><circle cx="5.7" cy="4.5" r="2.200" fill="#8cbbe6"/><circle cx="2.5" cy="9.5" r="2.200" fill="#a8cced"/><circle cx="2.5" cy="14.5" r="2.200" fill="#c0dbf2"/><circle cx="5.7" cy="19.5" r="2.200" fill="#d6e7f7"/><circle cx="11.1" cy="21.8" r="2.200" fill="#e8f1fa"/></svg>
<span class="t" style="left:228px;top:416px">正在发现数据上下文...</span>
<div class="btn" style="left:334px;width:109px">&lt; 上一页(<u>R</u>)</div>
<div class="btn" style="left:450px;width:75px;color:#a0a0a0;border-color:#bfbfbf;background:#efefef">下一页(<u>X</u>) &gt;</div>
<div class="btn" style="left:532px;width:75px;border-color:#0078d7;box-shadow:inset 0 0 0 1px rgba(0,120,215,.45)">保存</div>
<div class="btn" style="left:614px;width:75px">取消</div>
</div>
<!-- annotations -->
<svg style="left:0;top:0" width="1920" height="1058" viewBox="0 0 1920 1058"><path d="M1254 582 L1038 601 L1038 597.200 L1022.500 605.600 L1039.800 612.900 L1039.400 608.900 Z" fill="#f6343b"/><path d="M1294.400 615 L1199.400 730.700 L1196.100 728 L1192.100 745.700 L1208.800 737.300 L1205 734.600 Z" fill="#f6343b"/></svg>
<div class="abs" style="left:1141px;top:565px;width:20px;height:20px;border-radius:10px;background:#f6343b;color:#fff;font-size:13px;line-height:20px;text-align:center">1</div>
<div class="abs" style="left:1170px;top:558px;width:66px;height:34px;border-radius:3px;background:rgba(0,0,0,.6)"></div>
<div class="abs" style="left:1165px;top:570px;width:0;height:0;border-top:5px solid transparent;border-bottom:5px solid transparent;border-right:5px solid #666"></div>
<span class="t" style="left:1176px;top:565px;color:#fff;font-size:16px;line-height:22px;height:22px">勾选</span>
<div class="abs" style="left:1266px;top:660px;width:20px;height:20px;border-radius:10px;background:#f6343b;color:#fff;font-size:13px;line-height:20px;text-align:center">2</div>
<div class="abs" style="left:1910px;top:250px;width:10px;height:58px;background:linear-gradient(90deg,#5a6378 0,#3b4359 2px,#363e54 100%);border-radius:2px 0 0 2px;border:1px solid #2a3145;border-right:none"><div class="abs" style="left:4px;top:7px;width:4px;height:1px;background:#232a3a"></div><div class="abs" style="left:4px;top:9px;width:4px;height:1px;background:#232a3a"></div><div class="abs" style="left:4px;top:11px;width:4px;height:1px;background:#232a3a"></div><div class="abs" style="left:4px;top:13px;width:4px;height:1px;background:#232a3a"></div><div class="abs" style="left:4px;top:15px;width:4px;height:1px;background:#232a3a"></div><div class="abs" style="left:4px;top:17px;width:4px;height:1px;background:#232a3a"></div><div class="abs" style="left:4px;top:19px;width:4px;height:1px;background:#232a3a"></div><div class="abs" style="left:4px;top:21px;width:4px;height:1px;background:#232a3a"></div><div class="abs" style="left:4px;top:23px;width:4px;height:1px;background:#e9c63e"></div><div class="abs" style="left:4px;top:25px;width:4px;height:1px;background:#e6c83f"></div><div class="abs" style="left:4px;top:27px;width:4px;height:1px;background:#dfcb42"></div><div class="abs" style="left:4px;top:29px;width:4px;height:1px;background:#d4cd48"></div><div class="abs" style="left:4px;top:31px;width:4px;height:1px;background:#c4ce50"></div><div class="abs" style="left:4px;top:33px;width:4px;height:1px;background:#b0ce5a"></div><div class="abs" style="left:4px;top:35px;width:4px;height:1px;background:#9bcd64"></div><div class="abs" style="left:4px;top:37px;width:4px;height:1px;background:#88cc6e"></div><div class="abs" style="left:4px;top:39px;width:4px;height:1px;background:#76cb7a"></div><div class="abs" style="left:4px;top:41px;width:4px;height:1px;background:#66ca88"></div><div class="abs" style="left:4px;top:43px;width:4px;height:1px;background:#56c996"></div><div class="abs" style="left:4px;top:45px;width:4px;height:1px;background:#48c8a4"></div><div class="abs" style="left:4px;top:47px;width:4px;height:1px;background:#3ec8ae"></div><div class="abs" style="left:4px;top:49px;width:4px;height:1px;background:#38c8b4"></div><div class="abs" style="left:4px;top:51px;width:4px;height:1px;background:#34c8b8"></div></div>
<div id="status">
<svg style="left:4px;top:6px" width="17" height="12" viewBox="0 0 17 12"><path d="M3.800 0.8 H16 L13.200 11 H1 Z" fill="none" stroke="#fff" stroke-width="1.3"/></svg>
<span class="t" style="left:28px;top:5px">就绪</span>
<svg style="left:1566px;top:5px" width="12" height="14" viewBox="0 0 12 14"><path d="M6 12.500 V3 M2 6.500 L6 2.500 L10 6.500" fill="none" stroke="#0c1230" stroke-width="4.400" stroke-linejoin="round" stroke-linecap="round"/><path d="M6 12.300 V3.200 M2.200 6.500 L6 2.700 L9.800 6.500" fill="none" stroke="#fff" stroke-width="2.200" stroke-linejoin="round" stroke-linecap="round"/></svg>
<span class="t" style="left:1586px;top:5px">添加到源代码管理</span>
<div class="dd" style="left:1687px;top:9px;border-top:none;border-bottom:4px solid #fff;border-left-width:4px;border-right-width:4px"></div>
<svg style="left:1717px;top:4px" width="17" height="17" viewBox="0 0 17 17"><path d="M8.500 1 L16 8.500 L8.500 16 L1 8.500 Z" fill="#fff" stroke="#0c1230" stroke-width="1.400" stroke-linejoin="round"/><circle cx="7" cy="5.800" r="1.300" fill="#0c1230"/><circle cx="7" cy="11.500" r="1.300" fill="#0c1230"/><circle cx="10.800" cy="8.500" r="1.300" fill="#0c1230"/><path d="M7 5.800 V11.500 M7 6.200 L10.800 8.500" stroke="#0c1230" stroke-width="1"/></svg>
<span class="t" style="left:1740px;top:5px">选择存储库</span>
<div class="dd" style="left:1806px;top:9px;border-top:none;border-bottom:4px solid #fff;border-left-width:4px;border-right-width:4px"></div>
<svg style="left:1835px;top:5px" width="14" height="15" viewBox="0 0 14 15"><path d="M2.500 11 V6 C2.500 3 4.500 1 7 1 C9.500 1 11.500 3 11.500 6 V11 H13 V12 H1 V11 Z M5.500 13.500 H8.500" fill="none" stroke="#fff" stroke-width="1.2"/></svg>
<svg style="left:1877px;top:6px" width="16" height="13" viewBox="0 0 16 13"><path d="M0 0 H16 L8 13 Z" fill="#41b883"/><path d="M3.200 0 H12.800 L8 7.800 Z" fill="#e9f7f0"/><path d="M6 0 H10 L8 3.200 Z" fill="#35495e"/></svg>
<div class="abs" style="left:1898px;top:4px;width:18px;height:18px;border-radius:9px;background:radial-gradient(circle at 40% 35%,#f4fbf9,#cfe6e0)"></div>
</div>
<div id="taskbar"><div class="abs" style="left:111px;top:0;width:160px;height:8px;background:#10592b"></div><div class="abs" style="left:20px;top:6px;width:9px;height:2px;background:#cfd6d2;opacity:.85"></div><div class="abs" style="left:52px;top:6px;width:10px;height:2px;background:#cfd6d2;opacity:.85"></div><div class="abs" style="left:82px;top:6px;width:2px;height:2px;background:#cfd6d2;opacity:.85"></div><div class="abs" style="left:90px;top:6px;width:2px;height:2px;background:#cfd6d2;opacity:.85"></div><div class="abs" style="left:95px;top:6px;width:2px;height:2px;background:#cfd6d2;opacity:.85"></div><div class="abs" style="left:126px;top:6px;width:4px;height:2px;background:#7fae8f;opacity:.85"></div><div class="abs" style="left:284px;top:6px;width:8px;height:2px;background:#35b8c0;opacity:.85"></div><div class="abs" style="left:446px;top:6px;width:8px;height:2px;background:#2a86d8;opacity:.85"></div><div class="abs" style="left:1522px;top:6px;width:6px;height:2px;background:#d8701c;opacity:.85"></div><div class="abs" style="left:1543px;top:6px;width:10px;height:2px;background:#2a78c8;opacity:.85"></div><div class="abs" style="left:1568px;top:6px;width:8px;height:2px;background:#2a78c8;opacity:.85"></div><div class="abs" style="left:1588px;top:6px;width:14px;height:2px;background:#c8202c;opacity:.85"></div><div class="abs" style="left:1610px;top:6px;width:18px;height:2px;background:#3a8ad0;opacity:.85"></div><div class="abs" style="left:1640px;top:6px;width:8px;height:2px;background:#16181c;opacity:.85"></div><div class="abs" style="left:1666px;top:6px;width:10px;height:2px;background:#c8202c;opacity:.85"></div><div class="abs" style="left:1738px;top:6px;width:6px;height:2px;background:#2a86d8;opacity:.85"></div><div class="abs" style="left:1878px;top:6px;width:16px;height:2px;background:#e8ece8;opacity:.85"></div></div>
</body>
</html>
